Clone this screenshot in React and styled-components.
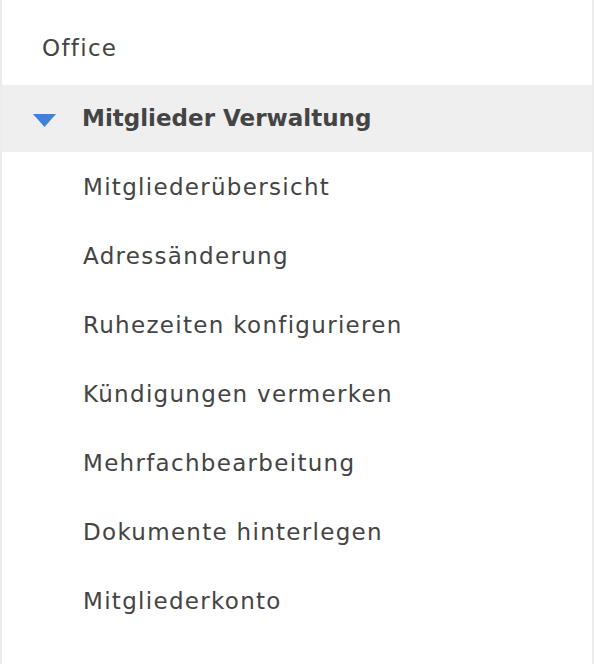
import styled, { createGlobalStyle } from 'styled-components'

const Global = createGlobalStyle`
  html, body {
    margin: 0;
    padding: 0;
    background: #ffffff;
  }
  body {
    font-family: "DejaVu Sans", "Liberation Sans", sans-serif;
  }
`
const Sidebar = styled.nav`
  width: 594px;
  height: 664px;
  box-sizing: border-box;
  border-left: 2px solid #ececec;
  border-right: 2px solid #ececec;
  padding-top: 13px;
  display: flex;
  flex-direction: column;
`
const Title = styled.div`
  height: 72px;
  display: flex;
  align-items: center;
  padding-left: 40px;
  padding-bottom: 3px;
  box-sizing: border-box;
  font-size: 23px;
  letter-spacing: 1.3px;
  color: #444;
`
const Group = styled.div`
  height: 67px;
  background: #efefef;
  display: flex;
  align-items: center;
  gap: 26px;
  padding-left: 31px;
  padding-bottom: 1px;
  box-sizing: border-box;
  font-size: 23px;
  font-weight: 700;
  color: #444;
`
const Caret = styled.svg`
  width: 23px;
  height: 13px;
  margin-top: 4px;
  flex: none;
`
const Item = styled.a`
  height: 69px;
  display: flex;
  align-items: center;
  padding-left: 81px;
  padding-top: 1px;
  box-sizing: border-box;
  font-size: 23px;
  letter-spacing: 1.3px;
  color: #444;
  text-decoration: none;
`

const items = [
  'Mitgliederübersicht',
  'Adressänderung',
  'Ruhezeiten konfigurieren',
  'Kündigungen vermerken',
  'Mehrfachbearbeitung',
  'Dokumente hinterlegen',
  'Mitgliederkonto',
]

export default function App() {
  return (
    <>
      <Global />
      <Sidebar>
        <Title>Office</Title>
        <Group>
          <Caret viewBox="0 0 23 13">
            <path d="M0 0 L23 0 L11.5 13 Z" fill="#3f80d8" />
          </Caret>
          Mitglieder Verwaltung
        </Group>
        {items.map(item => (
          <Item key={item}>{item}</Item>
        ))}
      </Sidebar>
    </>
  )
}
